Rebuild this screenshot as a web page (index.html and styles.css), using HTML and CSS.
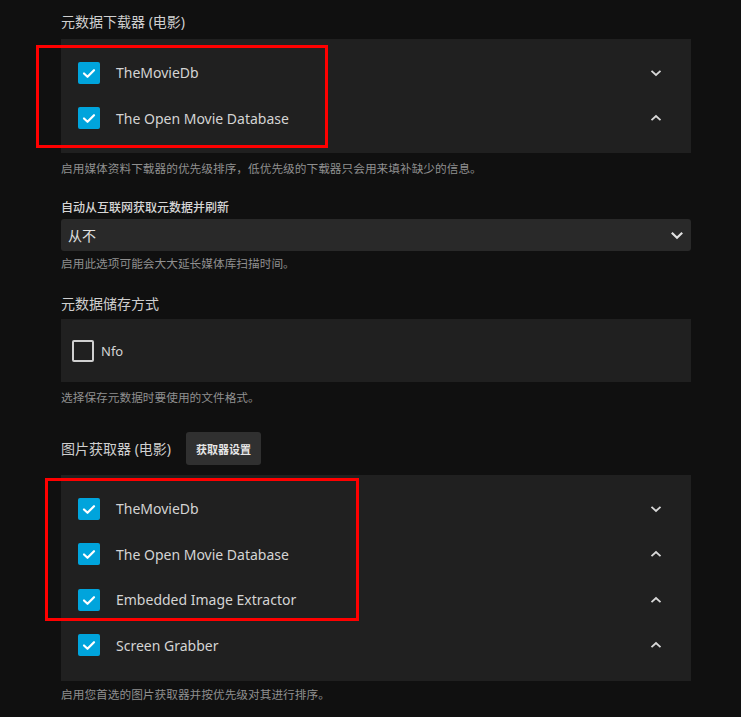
FILE: index.html
```html
<!DOCTYPE html>
<html lang="zh-CN">
<head>
  <meta charset="UTF-8">
  <title>媒体库设置</title>
  <link rel="stylesheet" href="styles.css">
</head>
<body>
  <div class="page">
    <section class="section">
      <h3 class="section-title">元数据下载器 (电影)</h3>
      <div class="list-panel">
        <div class="list-row">
          <span class="check checked"><svg viewBox="0 0 22 22"><path d="M6 11.5l3.5 3.3L16 8.2"/></svg></span>
          <span class="row-label">TheMovieDb</span>
          <span class="row-btn"><svg viewBox="0 0 12 8"><path d="M1.5 1.8L6 6l4.5-4.2"/></svg></span>
        </div>
        <div class="list-row">
          <span class="check checked"><svg viewBox="0 0 22 22"><path d="M6 11.5l3.5 3.3L16 8.2"/></svg></span>
          <span class="row-label">The Open Movie Database</span>
          <span class="row-btn"><svg viewBox="0 0 12 8"><path d="M1.5 6.2L6 2l4.5 4.2"/></svg></span>
        </div>
      </div>
      <div class="field-hint">启用媒体资料下载器的优先级排序，低优先级的下载器只会用来填补缺少的信息。</div>
    </section>

    <section class="section refresh">
      <label class="field-label">自动从互联网获取元数据并刷新</label>
      <div class="select">
        <span>从不</span>
        <svg viewBox="0 0 14 9"><path d="M1.8 1.8L7 6.8l5.2-5"/></svg>
      </div>
      <div class="field-hint tight">启用此选项可能会大大延长媒体库扫描时间。</div>
    </section>

    <section class="section savers">
      <h3 class="section-title">元数据储存方式</h3>
      <div class="saver-panel">
        <span class="check"></span>
        <span class="saver-label">Nfo</span>
      </div>
      <div class="field-hint">选择保存元数据时要使用的文件格式。</div>
    </section>

    <section class="section fetchers">
      <div class="title-row">
        <h3 class="section-title">图片获取器 (电影)</h3>
        <button class="small-btn">获取器设置</button>
      </div>
      <div class="list-panel tall">
        <div class="list-row">
          <span class="check checked"><svg viewBox="0 0 22 22"><path d="M6 11.5l3.5 3.3L16 8.2"/></svg></span>
          <span class="row-label">TheMovieDb</span>
          <span class="row-btn"><svg viewBox="0 0 12 8"><path d="M1.5 1.8L6 6l4.5-4.2"/></svg></span>
        </div>
        <div class="list-row">
          <span class="check checked"><svg viewBox="0 0 22 22"><path d="M6 11.5l3.5 3.3L16 8.2"/></svg></span>
          <span class="row-label">The Open Movie Database</span>
          <span class="row-btn"><svg viewBox="0 0 12 8"><path d="M1.5 6.2L6 2l4.5 4.2"/></svg></span>
        </div>
        <div class="list-row">
          <span class="check checked"><svg viewBox="0 0 22 22"><path d="M6 11.5l3.5 3.3L16 8.2"/></svg></span>
          <span class="row-label">Embedded Image Extractor</span>
          <span class="row-btn"><svg viewBox="0 0 12 8"><path d="M1.5 6.2L6 2l4.5 4.2"/></svg></span>
        </div>
        <div class="list-row">
          <span class="check checked"><svg viewBox="0 0 22 22"><path d="M6 11.5l3.5 3.3L16 8.2"/></svg></span>
          <span class="row-label">Screen Grabber</span>
          <span class="row-btn"><svg viewBox="0 0 12 8"><path d="M1.5 6.2L6 2l4.5 4.2"/></svg></span>
        </div>
      </div>
      <div class="field-hint last">启用您首选的图片获取器并按优先级对其进行排序。</div>
    </section>
  </div>

  <!-- annotation boxes drawn over the screenshot -->
  <div class="mark mark-1"></div>
  <div class="mark mark-2"></div>
</body>
</html>
```

FILE: styles.css
```css
:root {
  --bg: #101010;
  --panel: #202020;
  --select: #292929;
  --accent: #00a4dc;
  --text: #d4d4d4;
  --muted: #8f8f8f;
  --font: 'Noto Sans', 'Noto Sans CJK SC', sans-serif;
}
html, body {
  margin: 0;
  padding: 0;
  background: var(--bg);
  color: var(--text);
  font-family: var(--font);
}
body {
  position: relative;
  height: 717px;
  overflow: hidden;
}
.page {
  width: 630px;
  padding: 12px 0 0 61px;
}
.section {
  display: flex;
  flex-direction: column;
}
.section.refresh {
  margin-top: 24px;
}
.section.savers {
  margin-top: 23px;
}
.section.fetchers {
  margin-top: 27px;
}
.section-title {
  margin: 0 0 7px 0;
  font-size: 14px;
  font-weight: 400;
  line-height: 20px;
  color: #cfcfcf;
}
.section.savers .section-title {
  margin-bottom: 5px;
}
.title-row {
  display: flex;
  align-items: center;
  gap: 15px;
  margin-bottom: 10px;
}
.title-row .section-title {
  margin: 0;
}
.small-btn {
  font-family: var(--font);
  font-size: 11px;
  font-weight: 700;
  color: #e6e6e6;
  background: #303030;
  border: none;
  border-radius: 3px;
  height: 33px;
  padding: 0 10px;
}
.list-panel {
  background: var(--panel);
  padding: 11px 23px 12px 17px;
}
.list-panel.tall {
  padding-bottom: 13px;
}
.list-row {
  display: flex;
  align-items: center;
  height: 45.5px;
}
.check {
  box-sizing: border-box;
  width: 22px;
  height: 22px;
  border: 2px solid #d0d0d0;
  border-radius: 2px;
  flex-shrink: 0;
  display: flex;
}
.check.checked {
  background: var(--accent);
  border: none;
}
.check svg {
  width: 22px;
  height: 22px;
  fill: none;
  stroke: #fff;
  stroke-width: 2.2;
  stroke-linecap: round;
  stroke-linejoin: round;
}
.row-label {
  flex: 1;
  margin-left: 16px;
  font-size: 14px;
  color: var(--text);
}
.row-btn {
  width: 24px;
  height: 24px;
  display: flex;
  align-items: center;
  justify-content: center;
}
.row-btn svg {
  width: 12px;
  height: 8px;
  fill: none;
  stroke: #d8d8d8;
  stroke-width: 1.8;
}
.field-hint {
  margin-top: 7px;
  font-size: 11.7px;
  line-height: 16px;
  color: var(--muted);
}
.field-hint.tight {
  margin-top: 4px;
}
.field-hint.last {
  margin-top: 5px;
}
.field-label {
  font-size: 12px;
  font-weight: 500;
  line-height: 16px;
  color: #d6d6d6;
  margin-bottom: 3px;
}
.select {
  height: 32px;
  background: var(--select);
  border-radius: 3px;
  display: flex;
  align-items: center;
  justify-content: space-between;
  padding: 0 7px;
  font-size: 14px;
  color: #e0e0e0;
}
.select svg {
  width: 14px;
  height: 9px;
  fill: none;
  stroke: #e0e0e0;
  stroke-width: 2.2;
}
.saver-panel {
  height: 63px;
  background: var(--panel);
  display: flex;
  align-items: center;
  padding: 0 11px;
}
.saver-label {
  margin-left: 7px;
  font-size: 13px;
  color: var(--text);
}
.mark {
  position: absolute;
  border: 3px solid #ff0000;
  box-sizing: border-box;
  pointer-events: none;
}
.mark-1 {
  left: 36px;
  top: 45px;
  width: 292px;
  height: 103px;
}
.mark-2 {
  left: 45px;
  top: 478px;
  width: 314px;
  height: 143px;
}
```
